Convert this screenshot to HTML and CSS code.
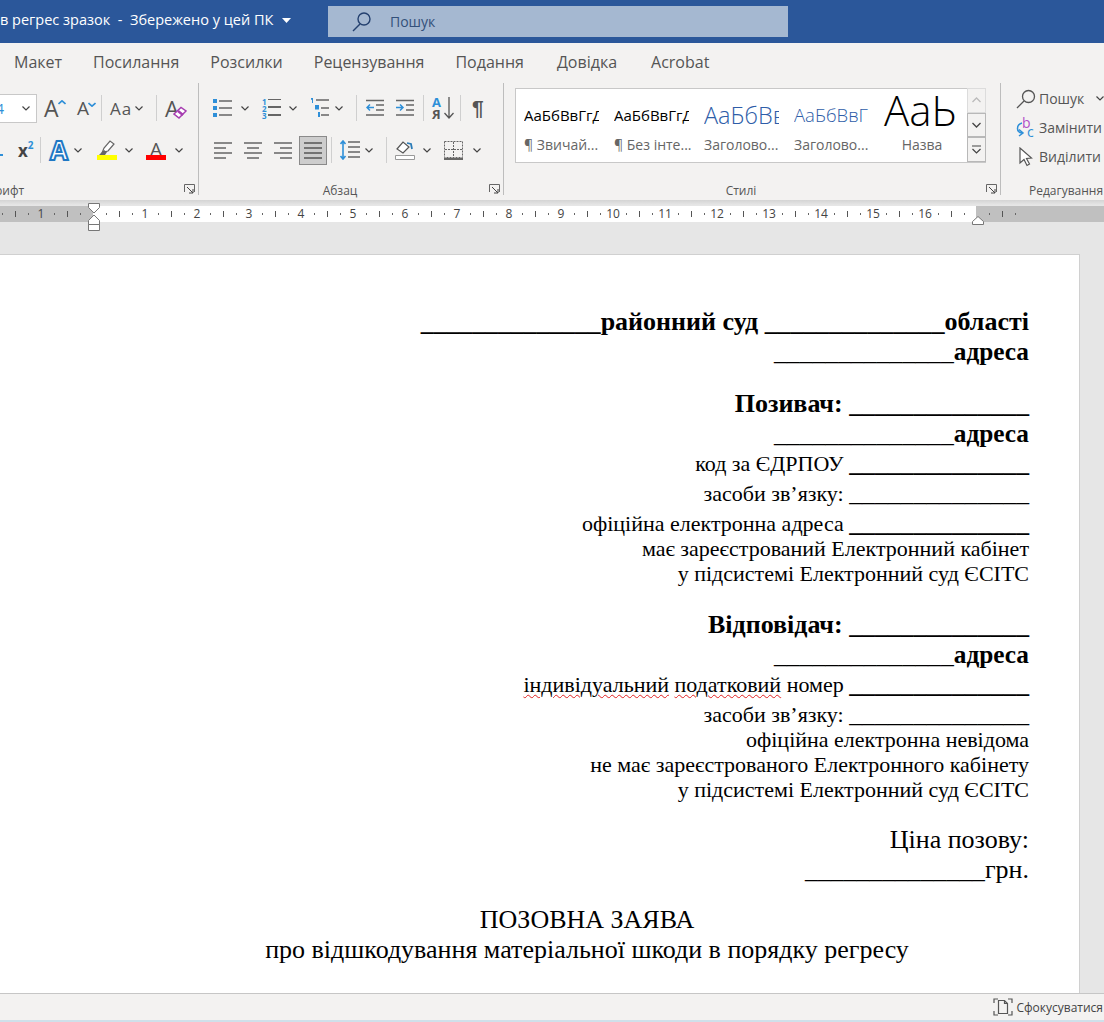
FILE: index.html
```html
<!DOCTYPE html>
<html lang="uk">
<head>
    <meta charset="UTF-8">
    <title>Word</title>
    <link rel="stylesheet" href="styles.css">
</head>
<body>
    <header class="titlebar">
        <div class="doc-name">в регрес зразок &nbsp;-&nbsp; Збережено у цей ПК<svg class="title-caret" width="9" height="5" viewBox="0 0 9 5"><path d="M0 0h9L4.500 5z" fill="#fff"/></svg></div>
        <div class="search-box">
            <svg width="22" height="22" viewBox="0 0 22 22" fill="none" stroke="#24406f" stroke-width="1.400"><circle cx="13" cy="8" r="6"/><path d="M9 13 2 20"/></svg>
            <span>Пошук</span>
        </div>
    </header>

    <nav class="tabs">
        <span>Макет</span><span>Посилання</span><span>Розсилки</span><span>Рецензування</span><span>Подання</span><span>Довідка</span><span>Acrobat</span>
    </nav>

    <section class="ribbon">
        <div class="group font-group">
            <div class="tools">
                <div class="tool-row">
                    <div class="size-box"><span class="size-value">4</span><svg class="chev" width="8" height="5" viewBox="0 0 8 5"><path d="M.5.5 4 4 7.500.5"/></svg></div>
                    <span class="glyph glyph-grow ml-7">A<svg width="8" height="5" viewBox="0 0 8 5"><path d="M.5 4 4 .8 7.500 4" fill="none" stroke="#2e8fd8" stroke-width="1.600"/></svg></span>
                    <span class="glyph glyph-shrink ml-13">A<svg width="8" height="5" viewBox="0 0 8 5"><path d="M.5 1 4 4.200 7.500 1" fill="none" stroke="#2e8fd8" stroke-width="1.600"/></svg></span>
                    <i class="sep ml-7"></i>
                    <span class="glyph glyph-case ml-8">Aa</span><svg class="chev ml-3" width="8" height="5" viewBox="0 0 8 5"><path d="M.5.5 4 4 7.500.5"/></svg>
                    <i class="sep ml-13"></i>
                    <span class="glyph glyph-clear ml-8">A<svg width="14" height="13" viewBox="0 0 14 13"><path d="M1 8 8 1.500l5 3.500-7 7z" fill="#fff" stroke="#a63db0" stroke-width="1.500"/><path d="M5 5l5 4" stroke="#a63db0" stroke-width="2.500"/></svg></span>
                </div>
                <div class="tool-row second">
                    <i class="sub-mark"></i>
                    <span class="glyph glyph-sup ml-15">x<sup>2</sup></span>
                    <i class="sep ml-6"></i>
                    <span class="glyph glyph-effect ml-9">A</span><svg class="chev ml-6" width="8" height="5" viewBox="0 0 8 5"><path d="M.5.5 4 4 7.500.5"/></svg>
                    <span class="swatch-tool ml-15">
                        <svg width="20" height="15" viewBox="0 0 20 15"><path d="M5 13 7 8l6-7 4 3-6 7-4 1z" fill="#fff" stroke="#666" stroke-width="1.200"/><path d="M2 15l5-5 3 2-2 3z" fill="#666"/></svg>
                        <b class="swatch yellow"></b>
                    </span><svg class="chev ml-8" width="8" height="5" viewBox="0 0 8 5"><path d="M.5.5 4 4 7.500.5"/></svg>
                    <span class="swatch-tool ml-13">
                        <span class="glyph glyph-color">A</span>
                        <b class="swatch red"></b>
                    </span><svg class="chev ml-9" width="8" height="5" viewBox="0 0 8 5"><path d="M.5.5 4 4 7.500.5"/></svg>
                </div>
            </div>
            <div class="group-label">рифт</div>
            <svg class="launcher" width="11" height="11" viewBox="0 0 11 11" fill="none" stroke="#666"><path d="M.5 8V.5h10V8"/><path d="M3 3l6 6M9 5v4H5" stroke="#444"/></svg>
        </div>

        <div class="group para-group">
            <div class="tools">
                <div class="tool-row">
                    <svg width="20" height="20" viewBox="0 0 20 20"><path d="M6 3h13M6 10h13M6 17h13" stroke="#666" stroke-width="1.400"/><path d="M0 1h4v4H0zM0 8h4v4H0zM0 15h4v4H0z" fill="#2e8fd8"/></svg>
                    <svg class="chev ml-8" width="8" height="5" viewBox="0 0 8 5"><path d="M.5.5 4 4 7.500.5"/></svg>
                    <span class="list-ico ml-13"><span class="list-nums"><b>1</b><b>2</b><b>3</b></span><span class="list-lines"></span></span>
                    <svg class="chev ml-8" width="8" height="5" viewBox="0 0 8 5"><path d="M.5.5 4 4 7.500.5"/></svg>
                    <svg class="ml-13" width="20" height="20" viewBox="0 0 20 20"><path d="M6 2h13M11 10h8M11 17h8" stroke="#666" stroke-width="1.400"/><path d="M1 0h2v5H2V1.500L1 2zM5 7h4v4.500H5zM8 14h2v5H8z" fill="#2e8fd8"/></svg>
                    <svg class="chev ml-5" width="8" height="5" viewBox="0 0 8 5"><path d="M.5.5 4 4 7.500.5"/></svg>
                    <i class="sep ml-13"></i>
                    <svg class="ml-9" width="18" height="18" viewBox="0 0 18 18"><path d="M0 1.500h18M10 6h8M10 11h8M0 16h18" stroke="#666" stroke-width="1.400"/><path d="M8 8.500H1M4 5.500l-3 3 3 3" fill="none" stroke="#2e8fd8" stroke-width="1.500"/></svg>
                    <svg class="ml-12" width="18" height="18" viewBox="0 0 18 18"><path d="M0 1.500h18M10 6h8M10 11h8M0 16h18" stroke="#666" stroke-width="1.400"/><path d="M0 8.500h7M4 5.500l3 3-3 3" fill="none" stroke="#2e8fd8" stroke-width="1.500"/></svg>
                    <i class="sep ml-9"></i>
                    <span class="sort-ico ml-8"><span class="sort-a">A</span><span class="sort-ya">Я</span><svg width="10" height="22" viewBox="0 0 10 22" fill="none" stroke="#555" stroke-width="1.300"><path d="M5 0v21M.5 16 5 21l4.500-5"/></svg></span>
                    <i class="sep ml-6"></i>
                    <span class="pilcrow ml-11">¶</span>
                </div>
                <div class="tool-row second">
                    <svg class="ml-1" width="18" height="18" viewBox="0 0 18 18"><path d="M0 2h18M0 7h12M0 12h18M0 17h12" stroke="#666" stroke-width="1.400"/></svg>
                    <svg class="ml-12" width="18" height="18" viewBox="0 0 18 18"><path d="M0 2h18M3 7h12M0 12h18M3 17h12" stroke="#666" stroke-width="1.400"/></svg>
                    <svg class="ml-12" width="18" height="18" viewBox="0 0 18 18"><path d="M0 2h18M6 7h12M0 12h18M6 17h12" stroke="#666" stroke-width="1.400"/></svg>
                    <span class="align-active ml-7"><svg width="18" height="18" viewBox="0 0 18 18"><path d="M0 2h18M0 7h18M0 12h18M0 17h18" stroke="#555" stroke-width="1.400"/></svg></span>
                    <i class="sep ml-4"></i>
                    <svg class="ml-8" width="20" height="20" viewBox="0 0 20 20"><path d="M8 2h12M8 7h12M8 12h12M8 17h12" stroke="#666" stroke-width="1.400"/><path d="M3 1v18M.5 4 3 1l2.500 3M.5 16 3 19l2.500-3" fill="none" stroke="#2e8fd8" stroke-width="1.600"/></svg>
                    <svg class="chev ml-5" width="8" height="5" viewBox="0 0 8 5"><path d="M.5.5 4 4 7.500.5"/></svg>
                    <i class="sep ml-13"></i>
                    <svg class="ml-8" width="20" height="20" viewBox="0 0 20 20"><path d="M2 9l6-7 6 5-6 6z" fill="#fff" stroke="#555" stroke-width="1.200"/><path d="M12 3l4 1 1 5" fill="none" stroke="#2b7cb8" stroke-width="1.800"/><path d="M.5 15.500h19v4H.500z" fill="#fff" stroke="#999"/></svg>
                    <svg class="chev ml-8" width="8" height="5" viewBox="0 0 8 5"><path d="M.5.5 4 4 7.500.5"/></svg>
                    <svg class="ml-13" width="19" height="19" viewBox="0 0 19 19" fill="none" stroke="#666"><path d="M.5.500h18v16H.500zM9.500 1v16M1 8.500h17" stroke-dasharray="2 1"/><path d="M0 18h19" stroke="#444" stroke-width="1.600"/></svg>
                    <svg class="chev ml-10" width="8" height="5" viewBox="0 0 8 5"><path d="M.5.5 4 4 7.500.5"/></svg>
                </div>
            </div>
            <div class="group-label">Абзац</div>
            <svg class="launcher" width="11" height="11" viewBox="0 0 11 11" fill="none" stroke="#666"><path d="M.5 8V.5h10V8"/><path d="M3 3l6 6M9 5v4H5" stroke="#444"/></svg>
        </div>

        <div class="group styles-group">
            <div class="gallery">
                <div class="style-cards">
                    <div class="style-card"><div class="sample sample-normal">АаБбВвГгДд</div><div class="style-name">¶ Звичай...</div></div>
                    <div class="style-card"><div class="sample sample-normal">АаБбВвГгДд</div><div class="style-name">¶ Без інте...</div></div>
                    <div class="style-card"><div class="sample sample-h1">АаБбВвГг</div><div class="style-name">Заголово...</div></div>
                    <div class="style-card"><div class="sample sample-h2">АаБбВвГг</div><div class="style-name">Заголово...</div></div>
                    <div class="style-card title-card"><div class="sample sample-title">АаЬ</div><div class="style-name">Назва</div></div>
                </div>
                <div class="gallery-arrows">
                    <span class="arrow disabled"><svg width="9" height="6" viewBox="0 0 9 6" fill="none" stroke="#bbb" stroke-width="1.300"><path d="M.5 5 4.500 1l4 4"/></svg></span>
                    <span class="arrow"><svg width="9" height="6" viewBox="0 0 9 6" fill="none" stroke="#444" stroke-width="1.300"><path d="M.5 1l4 4 4-4"/></svg></span>
                    <span class="arrow"><svg width="9" height="9" viewBox="0 0 9 9" fill="none" stroke="#444" stroke-width="1.200"><path d="M0 1h9M.5 4l4 4 4-4"/></svg></span>
                </div>
            </div>
            <div class="group-label">Стилі</div>
            <svg class="launcher" width="11" height="11" viewBox="0 0 11 11" fill="none" stroke="#666"><path d="M.5 8V.5h10V8"/><path d="M3 3l6 6M9 5v4H5" stroke="#444"/></svg>
        </div>

        <div class="group edit-group">
            <div class="edit-list">
                <div class="edit-row"><svg width="20" height="20" viewBox="0 0 20 20" fill="none" stroke="#555" stroke-width="1.300"><circle cx="12.500" cy="7.500" r="6"/><path d="M8 12 1 19"/></svg><span>Пошук</span><svg class="chev ml-9" width="8" height="5" viewBox="0 0 8 5"><path d="M.5.5 4 4 7.500.5"/></svg></div>
                <div class="edit-row"><svg width="20" height="22" viewBox="0 0 20 22" fill="none"><text x="6" y="11" class="replace-b">b</text><text x="11" y="20" class="replace-c">c</text><path d="M6 6C0 8 0 15 6 16M3 12.500l4 3.500-4 3" stroke="#2e8fd8" stroke-width="1.500"/></svg><span>Замінити</span></div>
                <div class="edit-row"><svg width="20" height="20" viewBox="0 0 20 20" fill="#fff" stroke="#555" stroke-width="1.200"><path d="M4 1v15l4-3.500 3 6 2.500-1.500-3-5.500 5-.5z"/></svg><span>Виділити</span></div>
            </div>
            <div class="group-label">Редагування</div>
        </div>
    </section>

    <div class="ruler">
        <div class="ruler-margin left-margin"><div class="marks left-marks"><i class="dot"></i><i class="tick"></i><i class="dot"></i><span>1</span><i class="dot"></i><i class="tick"></i><i class="dot"></i></div></div>
        <div class="ruler-track" id="rulerTrack"></div>
        <div class="ruler-margin right-margin"><div class="marks"><i class="dot"></i><i class="tick"></i><i class="dot"></i></div></div>
        <svg class="indent-left" width="12" height="28" viewBox="0 0 12 28" fill="#fff" stroke="#777"><path d="M.5.500h11v4L6 10 .5 4.500zM.5 17.500 6 12l5.500 5.500v4H.500zM.5 21.500h11v6H.500z"/></svg>
        <svg class="indent-right" width="12" height="9" viewBox="0 0 12 9" fill="#fff" stroke="#777"><path d="M.5 8.500v-3L6 .5l5.500 5v3z"/></svg>
    </div>

    <main class="workspace">
        <article class="page">
            <p class="line big strong"><span class="fill">______________</span>районний суд <span class="fill">______________</span>області</p>
            <p class="line big strong"><span class="fill thin">______________</span><span class="tight">адреса</span></p>
            <p class="line big strong gap-big">Позивач: <span class="fill">______________</span></p>
            <p class="line big strong"><span class="fill thin">______________</span><span class="tight">адреса</span></p>
            <p class="line mid">код за ЄДРПОУ <b class="fill">______________</b></p>
            <p class="line mid">засоби зв’язку: <span class="fill">______________</span></p>
            <p class="line mid">офіційна електронна адреса <b class="fill">______________</b></p>
            <p class="line small">має зареєстрований Електронний кабінет</p>
            <p class="line small">у підсистемі Електронний суд ЄСІТС</p>
            <p class="line big strong gap-big">Відповідач: <span class="fill">______________</span></p>
            <p class="line big strong"><span class="fill thin">______________</span><span class="tight">адреса</span></p>
            <p class="line mid"><span class="spell">індивідуальний</span> <span class="spell">податковий</span> номер <b class="fill">______________</b></p>
            <p class="line mid">засоби зв’язку: <span class="fill">______________</span></p>
            <p class="line small">офіційна електронна невідома</p>
            <p class="line small">не має зареєстрованого Електронного кабінету</p>
            <p class="line small">у підсистемі Електронний суд ЄСІТС</p>
            <p class="line big gap-big">Ціна позову:</p>
            <p class="line big"><span class="fill">______________</span>грн.</p>
            <p class="line big center heading-gap">ПОЗОВНА ЗАЯВА</p>
            <p class="line big center">про відшкодування матеріальної шкоди в порядку регресу</p>
            <i class="next-page-mark"></i>
        </article>
    </main>

    <footer class="statusbar">
        <svg width="20" height="18" viewBox="0 0 20 18" fill="none" stroke="#555"><path d="M1 5V1h4M15 1h4v4M1 13v4h4M15 17h4v-4" stroke-width="1.200"/><path d="M5.500 2.500h6l3 3v10h-9zM11.500 2.500v3h3" stroke-width="1.200"/></svg>
        <span>Сфокусуватися</span>
    </footer>
    <div class="taskbar-edge"></div>

    <script>
        // Ruler cells, 52px long: dot, tick, dot, then the number
        const track = document.getElementById('rulerTrack');
        for (let i = 1; i <= 17; i++) {
            const cell = document.createElement('div');
            cell.className = 'marks';
            cell.innerHTML = '<i class="dot"></i><i class="tick"></i><i class="dot"></i><span>' + (i <= 16 ? i : '') + '</span>';
            track.appendChild(cell);
        }
    </script>
</body>
</html>
```

FILE: styles.css
```css
* {
    margin: 0;
    padding: 0;
    box-sizing: border-box;
}
html, body {
    height: 100%;
    overflow: hidden;
    background-color: #e6e6e6;
    font-family: "Open Sans", "Noto Sans", sans-serif;
}
body {
    display: flex;
    flex-direction: column;
    height: 1022px;
}
svg {
    flex: none;
    display: block;
}

/* spacing between ribbon tools */
.ml-1 { margin-left: 1px; }
.ml-3 { margin-left: 3px; }
.ml-4 { margin-left: 4px; }
.ml-5 { margin-left: 5px; }
.ml-6 { margin-left: 6px; }
.ml-7 { margin-left: 7px; }
.ml-8 { margin-left: 8px; }
.ml-9 { margin-left: 9px; }
.ml-10 { margin-left: 10px; }
.ml-11 { margin-left: 11px; }
.ml-12 { margin-left: 12px; }
.ml-13 { margin-left: 13px; }
.ml-15 { margin-left: 15px; }

/* title bar */
.titlebar {
    height: 43px;
    flex: none;
    background-color: #2b579a;
    display: flex;
    color: #fff;
}
.doc-name {
    width: 328px;
    flex: none;
    padding-top: 10px;
    font-size: 14.500px;
    white-space: nowrap;
    overflow: hidden;
    display: flex;
    align-items: flex-start;
}
.title-caret {
    margin: 8px 0 0 9px;
}
.search-box {
    margin-top: 6px;
    width: 460px;
    height: 31px;
    background-color: #a5b8d1;
    color: #33507a;
    font-size: 14px;
    display: flex;
    align-items: center;
    padding-left: 23px;
    gap: 17px;
}

/* tabs */
.tabs {
    height: 40px;
    flex: none;
    background-color: #f3f2f1;
    display: flex;
    gap: 31px;
    padding: 8px 0 0 14px;
    font-size: 16px;
    color: #555;
}
.tabs span:nth-last-child(2) {
    margin-left: 2px;
}
.tabs span:last-child {
    margin-left: 3px;
}

/* ribbon */
.ribbon {
    height: 117px;
    flex: none;
    background-color: #f3f2f1;
    display: flex;
}
.group {
    position: relative;
    border-right: 1px solid #bdbdbd;
    flex: none;
    margin-bottom: 5px;
}
.font-group {
    width: 199px;
}
.para-group {
    width: 305px;
}
.styles-group {
    width: 497px;
    padding: 5px 0 0 11px;
}
.edit-group {
    border-right: none;
    width: 103px;
}
.group-label {
    position: absolute;
    left: 0;
    right: 22px;
    bottom: -4px;
    text-align: center;
    font-size: 12px;
    line-height: 16px;
    color: #555;
}
.font-group .group-label {
    left: -5px;
    text-align: left;
}
.edit-group .group-label {
    left: 28px;
    right: auto;
    white-space: nowrap;
}
.launcher {
    position: absolute;
    right: 3px;
    bottom: 0;
}
.tools {
    padding-top: 10px;
}
.tool-row {
    display: flex;
    align-items: center;
    height: 30px;
}
.second {
    margin-top: 12px;
}
.sep {
    flex: none;
    width: 1px;
    height: 26px;
    background-color: #cfcfcf;
}
.chev {
    fill: none;
    stroke: #444;
    stroke-width: 1.200;
}
.size-box {
    width: 37px;
    height: 29px;
    flex: none;
    background-color: #fff;
    border: 1px solid #c8c8c8;
    border-left: none;
    display: flex;
    align-items: center;
    justify-content: space-between;
    padding-right: 6px;
    font-size: 14px;
    color: #2e8fd8;
}
.size-value {
    margin-left: -4px;
}
.glyph {
    display: flex;
    flex: none;
    color: #555;
    line-height: 1;
}
.glyph-grow {
    font-size: 23px;
    width: 20px;
}
.glyph-grow svg, .glyph-shrink svg {
    margin: 3px 0 0 -1px;
}
.glyph-shrink {
    font-size: 19px;
    width: 17px;
}
.glyph-case {
    font-size: 17px;
    width: 22px;
    letter-spacing: 1px;
}
.glyph-clear {
    font-size: 22px;
    width: 21px;
}
.glyph-clear svg {
    margin: 9px 0 0 -6px;
}
.sub-mark {
    flex: none;
    width: 3px;
    height: 2px;
    margin-top: 10px;
    background-color: #2e8fd8;
}
.glyph-sup {
    font-size: 17px;
    font-weight: 700;
    color: #444;
    width: 16px;
}
.glyph-sup sup {
    color: #2e8fd8;
    font-size: 10px;
    line-height: 1;
    margin-top: -2px;
}
.glyph-effect {
    font-size: 26px;
    width: 18px;
    justify-content: center;
    font-weight: 700;
    color: #fff;
    -webkit-text-stroke: 2px #1f78c4;
    text-shadow: 0 0 2px #8cc4ee;
}
.swatch-tool {
    display: flex;
    flex: none;
    flex-direction: column;
    align-items: center;
    width: 20px;
}
.swatch {
    display: block;
    width: 20px;
    height: 5px;
}
.yellow {
    background-color: #ffff00;
}
.red {
    background-color: #ff0000;
}
.glyph-color {
    font-size: 19px;
    height: 15px;
}

/* paragraph group */
.para-group .tools {
    padding-left: 14px;
}
.list-ico {
    display: flex;
    flex: none;
    width: 19px;
    height: 20px;
    gap: 1px;
}
.list-nums {
    display: flex;
    flex-direction: column;
    font-size: 8px;
    line-height: 7px;
    color: #2e8fd8;
}
.list-lines {
    flex: 1;
    height: 17px;
    margin-top: 1px;
    background: linear-gradient(#666 0 1.500px, transparent 1.500px 7.500px, #666 7.500px 9px, transparent 9px 15.500px, #666 15.500px 17px);
}
.sort-ico {
    display: grid;
    flex: none;
    grid-template-columns: 12px 10px;
    width: 22px;
    height: 24px;
    font-size: 13px;
    line-height: 12px;
    font-weight: 700;
}
.sort-a {
    color: #2e8fd8;
    grid-row: 1;
}
.sort-ya {
    color: #555;
    grid-row: 2;
}
.sort-ico svg {
    grid-row: 1 / 3;
    grid-column: 2;
    margin-top: 1px;
}
.pilcrow {
    font-family: "Liberation Sans", sans-serif;
    font-size: 21px;
    font-weight: 700;
    color: #555;
}
.align-active {
    width: 28px;
    height: 29px;
    flex: none;
    display: flex;
    align-items: center;
    justify-content: center;
    background-color: #cdcdcd;
    border: 1px solid #8a8a8a;
}

/* styles gallery */
.gallery {
    width: 471px;
    height: 75px;
    display: flex;
    background-color: #fff;
    border: 1px solid #c8c8c8;
}
.style-cards {
    flex: 1;
    display: flex;
    padding-left: 8px;
    overflow: hidden;
}
.style-card {
    width: 90px;
    flex: none;
}
.sample {
    width: 75px;
    height: 46px;
    padding-top: 15px;
    white-space: nowrap;
    overflow: hidden;
    color: #000;
    font-size: 15px;
    line-height: 22px;
}
.sample-h1 {
    font-size: 23.500px;
    color: #2e5da8;
    font-weight: 300;
}
.sample-h2 {
    font-size: 18.500px;
    color: #2e5da8;
    font-weight: 300;
}
.sample-title {
    font-size: 42px;
    font-weight: 300;
    padding-top: 0;
    line-height: 42px;
    overflow: visible;
}
.style-name {
    width: 78px;
    font-size: 14px;
    line-height: 18px;
    color: #666;
    white-space: nowrap;
    padding-top: 1px;
}
.title-card .style-name {
    text-align: center;
    width: 76px;
}
.gallery-arrows {
    width: 18px;
    flex: none;
    display: flex;
    flex-direction: column;
    gap: 1px;
    background-color: #f3f2f1;
}
.arrow {
    flex: 1;
    display: flex;
    align-items: center;
    justify-content: center;
    border: 1px solid #b8b8b8;
    margin: -1px -1px 0 0;
}
.arrow.disabled {
    border-color: #dcdcdc;
}

/* editing group */
.edit-list {
    padding: 1px 0 0 15px;
}
.edit-row {
    display: flex;
    align-items: center;
    gap: 3px;
    height: 29px;
    font-size: 14px;
    color: #555;
    white-space: nowrap;
}
.replace-b {
    font-size: 14px;
    fill: #b24fc8;
}
.replace-c {
    font-size: 14px;
    fill: #2e8fd8;
}

/* ruler */
.ruler {
    position: relative;
    height: 22px;
    flex: none;
    padding-top: 6px;
    display: flex;
    background: linear-gradient(#d4d4d4, #e6e6e6 5px);
    font-size: 12px;
    color: #444;
}
.ruler-margin {
    height: 16px;
    background-color: #c0c0c0;
    overflow: hidden;
    flex: none;
}
.left-margin {
    width: 93px;
}
.right-margin {
    flex: 1;
    padding-left: 6.500px;
}
.ruler-track {
    width: 883px;
    height: 16px;
    padding-left: 6.500px;
    background-color: #fff;
    display: flex;
    flex: none;
    overflow: hidden;
}
.marks {
    display: grid;
    flex: none;
    grid-auto-flow: column;
    grid-auto-columns: 13px;
    justify-items: center;
    align-items: center;
    height: 16px;
    line-height: 16px;
}
.left-marks {
    margin-left: -4.500px;
}
.dot {
    width: 1px;
    height: 2px;
    background-color: #666;
}
.tick {
    width: 1px;
    height: 6px;
    background-color: #555;
}
.indent-left {
    position: absolute;
    left: 88px;
    top: 3px;
}
.indent-right {
    position: absolute;
    left: 972px;
    top: 16px;
}

/* document */
.workspace {
    flex: 1;
    min-height: 0;
    overflow: hidden;
    padding-top: 32px;
}
.page {
    position: relative;
    width: 1080px;
    min-height: 800px;
    background-color: #fff;
    border: 1px solid #d0d0d0;
    border-left: none;
    padding: 52px 50px 0 145px;
    font-family: "Liberation Serif", serif;
    color: #000;
}
.line {
    text-align: right;
    white-space: nowrap;
}
.big {
    font-size: 26px;
    line-height: 30px;
}
.mid {
    font-size: 22px;
    line-height: 30px;
}
.small {
    font-size: 22px;
    line-height: 25px;
}
.mid + .small {
    margin-top: -3px;
}
.strong {
    font-weight: 700;
}
.thin {
    font-weight: 400;
}
.tight {
    font-size: 25.300px;
    line-height: 0;
}
.fill {
    font-size: 25.700px;
    line-height: 0;
}
.gap-big {
    margin-top: 22px;
}
.small + .gap-big {
    margin-top: 23.500px;
}
.heading-gap {
    margin-top: 19.500px;
}
.center {
    text-align: center;
}
.spell {
    text-decoration: underline wavy #e02020 1px;
    text-underline-offset: 2px;
}
.next-page-mark {
    position: absolute;
    right: 67px;
    bottom: -1px;
    width: 2px;
    height: 1px;
    background-color: #000;
}

/* status bar */
.statusbar {
    height: 27px;
    flex: none;
    background-color: #f3f2f1;
    border-top: 1px solid #c6c6c6;
    display: flex;
    justify-content: flex-end;
    align-items: center;
    gap: 3px;
    padding-right: 1px;
    font-size: 12px;
    color: #444;
    white-space: nowrap;
}
.taskbar-edge {
    height: 2px;
    flex: none;
    background-color: #cfe0ea;
}
```
